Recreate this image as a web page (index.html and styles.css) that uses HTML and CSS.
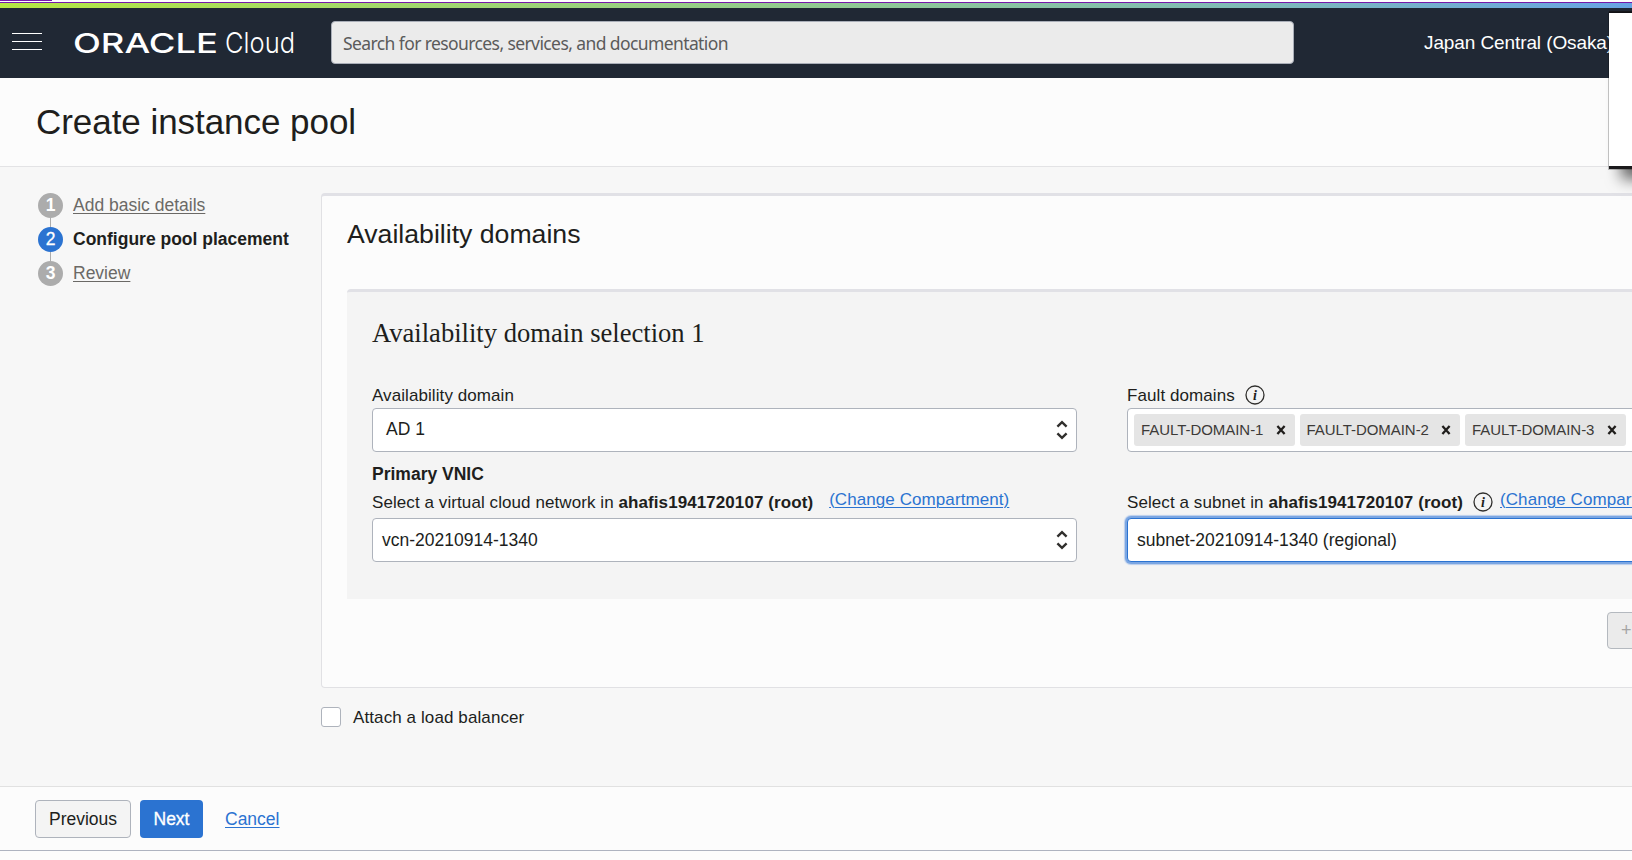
FILE: index.html
```html
<!DOCTYPE html>
<html lang="en">
<head>
<meta charset="utf-8">
<title>Create instance pool</title>
<link rel="stylesheet" href="styles.css">
</head>
<body>
<div class="page">
  <div class="tab-line"><span class="tab-mark"></span></div>
  <div class="rainbow"></div>
  <header class="topbar">
    <div class="menu"><i></i><i></i><i></i></div>
    <div class="logo">
      <svg width="222" height="30" viewBox="0 0 222 30" role="img">
        <text class="logo-oracle" x="-1" y="23.8" textLength="145" lengthAdjust="spacingAndGlyphs">ORACLE</text>
        <text class="logo-cloud" x="151" y="23.8" textLength="70" lengthAdjust="spacingAndGlyphs">Cloud</text>
      </svg>
    </div>
    <div class="search"><span>Search for resources, services, and documentation</span></div>
    <div class="region">Japan Central (Osaka)</div>
  </header>
  <div class="title-bar"><h1>Create instance pool</h1></div>
  <main class="content">
    <nav class="steps">
      <div class="step"><b class="num">1</b><a class="step-link">Add basic details</a></div>
      <div class="step active"><b class="num">2</b><span class="step-link">Configure pool placement</span></div>
      <div class="step"><b class="num">3</b><a class="step-link">Review</a></div>
    </nav>
    <section class="main-col">
      <div class="panel">
        <h2>Availability domains</h2>
        <div class="card">
          <h3>Availability domain selection 1</h3>
          <div class="cols">
            <div class="col">
              <div class="label"><span>Availability domain</span></div>
              <div class="field pad-ad"><span>AD 1</span>
                <svg class="updown" width="12" height="20" viewBox="0 0 12 20"><path d="M1.4 6.6 6 2.2l4.6 4.4M1.4 13.4 6 17.8l4.6-4.4"/></svg></div>
              <div class="subhead">Primary VNIC</div>
              <div class="label second"><span>Select a virtual cloud network in <b>ahafis1941720107 (root)</b></span><a class="change c1">(Change Compartment)</a></div>
              <div class="field low"><span>vcn-20210914-1340</span>
                <svg class="updown" width="12" height="20" viewBox="0 0 12 20"><path d="M1.4 6.6 6 2.2l4.6 4.4M1.4 13.4 6 17.8l4.6-4.4"/></svg></div>
            </div>
            <div class="col">
              <div class="label"><span>Fault domains</span>
                <svg class="info" width="20" height="20" viewBox="0 0 20 20"><circle cx="10" cy="10" r="9"/><text x="10" y="14.6">i</text></svg></div>
              <div class="field chips">
                <div class="chip"><span>FAULT-DOMAIN-1</span><svg width="10" height="10" viewBox="0 0 10 10"><path d="M1.4 1 8.6 9M8.6 1 1.4 9"/></svg></div>
                <div class="chip"><span>FAULT-DOMAIN-2</span><svg width="10" height="10" viewBox="0 0 10 10"><path d="M1.4 1 8.6 9M8.6 1 1.4 9"/></svg></div>
                <div class="chip"><span>FAULT-DOMAIN-3</span><svg width="10" height="10" viewBox="0 0 10 10"><path d="M1.4 1 8.6 9M8.6 1 1.4 9"/></svg></div>
              </div>
              <div class="subhead"></div>
              <div class="label second"><span>Select a subnet in <b>ahafis1941720107 (root)</b></span>
                <svg class="info" width="20" height="20" viewBox="0 0 20 20"><circle cx="10" cy="10" r="9"/><text x="10" y="14.6">i</text></svg><a class="change c2">(Change Compartment)</a></div>
              <div class="field low focus"><span>subnet-20210914-1340 (regional)</span></div>
            </div>
          </div>
        </div>
        <div class="add-row"><div class="add">+</div></div>
      </div>
      <div class="check-row"><span class="box"></span><span class="check-label">Attach a load balancer</span></div>
    </section>
  </main>
  <footer class="actions">
    <div class="btn prev"><span>Previous</span></div>
    <div class="btn next"><span>Next</span></div>
    <a class="cancel">Cancel</a>
  </footer>
  <div class="tail"></div>
  <div class="overlay"></div>
</div>
</body>
</html>
```
FILE: styles.css
```css
* { box-sizing: border-box; }
body { margin: 0; font-family: "Liberation Sans", Arial, sans-serif; color: #201e1c; }
h1, h2, h3 { margin: 0; font-weight: 400; }
span, a { white-space: nowrap; }
.page { position: relative; width: 1632px; height: 860px; overflow: hidden; background: #f7f7f7; display: flex; flex-direction: column; }
.tab-line { height: 3px; flex: none; background: #fff; border-bottom: 1px solid #7719aa; display: flex; }
.tab-mark { width: 52px; height: 1px; background: #7719aa; }
.rainbow { height: 5px; flex: none; background: linear-gradient(90deg, #b5e742 0%, #a5da65 20%, #80bcb5 75%, #68a4e4 100%); }
.topbar { height: 70px; flex: none; background: #202834; display: flex; }
.menu { width: 30px; height: 17px; margin: 25px 0 0 12px; display: flex; flex-direction: column; justify-content: space-between; }
.menu i { height: 1px; background: #fff; }
.logo { margin: 21px 0 0 32px; width: 222px; height: 30px; }
.logo svg { display: block; overflow: visible; }
.logo-oracle { font: 500 27px Inter, sans-serif; fill: #fff; }
.logo-cloud { font: 300 29px Inter, sans-serif; fill: #fff; }
.search { width: 963px; height: 43px; flex: none; margin: 13px 0 0 35px; background: #ebebeb; border: 1px solid #a9aeb8; border-radius: 4px; padding: 1px 0 0 11px; display: flex; align-items: center; color: #5b5b5b; font: 17.5px "Noto Sans", sans-serif; letter-spacing: -.6px; }
.region { margin: 24px 0 0 130px; font-size: 19px; line-height: 22px; letter-spacing: -.1px; color: #fff; white-space: nowrap; }
.title-bar { height: 89px; flex: none; background: #fcfcfc; border-bottom: 1px solid #e3e3e5; padding: 23px 0 0 36px; }
h1 { font-size: 35px; line-height: 42px; letter-spacing: -.05px; white-space: nowrap; }
.content { height: 619px; flex: none; display: flex; }
.steps { width: 321px; flex: none; padding: 26px 0 0 38px; }
.step { height: 34px; display: flex; position: relative; }
.step + .step::before { content: ""; position: absolute; left: 12px; top: -9px; width: 1px; height: 9px; background: #acacac; }
.num { width: 25px; height: 25px; border-radius: 50%; background: #acacac; color: #fff; text-align: center; font-size: 17.5px; line-height: 25px; }
.active .num { background: #2b73d1; font-weight: 400; -webkit-text-stroke: .3px #fff; }
.step-link { margin-left: 10px; font-size: 17.5px; line-height: 25px; color: #6b6966; text-decoration: underline; text-underline-offset: 2px; text-decoration-thickness: 1px; align-self: flex-start; }
.active .step-link { color: #201e1c; font-weight: 700; text-decoration: none; }
.main-col { flex: none; width: 1600px; padding-top: 26px; }
.panel { height: 495px; background: #fcfcfc; border: 1px solid #e1e1e4; border-top: 3px solid #e1e1e6; border-radius: 4px; padding: 22px 25px 0; }
h2 { font-size: 26.65px; line-height: 32px; white-space: nowrap; }
.card { margin-top: 39px; height: 310px; background: #f4f4f4; border-top: 3px solid #e1e1e6; border-radius: 4px 4px 0 0; padding: 22px 0 0 25px; }
h3 { font: 26.6px/38px "Liberation Serif", serif; white-space: nowrap; }
.cols { display: flex; gap: 50px; padding-top: 33px; }
.col { width: 705px; flex: none; }
.label { height: 23px; font-size: 17px; line-height: 22px; letter-spacing: .08px; display: flex; }
.field { height: 44px; background: #fff; border: 1px solid #aeb3bc; border-radius: 4px; padding: 0 9px; display: flex; align-items: center; justify-content: space-between; font-size: 17.5px; }
.field span { margin-top: -2px; }
.field.low span { margin-top: 0; }
.field.pad-ad { padding-left: 13px; }
.updown { fill: none; stroke: #302f2d; stroke-width: 2.4; margin-right: -1px; flex: none; }
.subhead { height: 33px; padding-top: 11px; font-size: 17.5px; line-height: 22px; font-weight: 700; }
.label.second { height: 33px; padding-top: 7px; }
.change { color: #2b73d1; text-decoration: underline; text-decoration-thickness: 1px; text-underline-offset: 2px; margin-top: -3px; }
.c1 { margin-left: 16px; }
.c2 { margin-left: 7px; }
.info { margin: 0 0 0 10px; overflow: visible; flex: none; }
.info circle { fill: none; stroke: #302f2d; stroke-width: 1.3; }
.info text { font: italic 700 14px "Liberation Serif", serif; text-anchor: middle; fill: #201e1c; }
.field.chips { justify-content: flex-start; gap: 5px; padding: 0 6px; }
.chip { width: 160.5px; height: 32px; flex: none; background: #e5e5e5; border-radius: 3px; padding: 0 9px 0 7px; display: flex; align-items: center; justify-content: space-between; font-size: 15px; letter-spacing: -.05px; color: #3c3a38; }
.field .chip span { margin-top: -1px; }
.chip path { fill: none; stroke: #201e1c; stroke-width: 2.3; }
.field.focus { border-color: #2b73d1; box-shadow: 0 0 0 2px #7ba6e2, 0 0 1px 3px #b8cdec; }
.add-row { display: flex; padding: 13px 0 0 1260px; }
.add { width: 120px; flex: none; height: 37px; background: #ebebeb; border: 1px solid #b4b9bf; border-radius: 4px; padding-left: 13px; font-size: 18px; line-height: 34px; color: #a5a5a5; }
.check-row { display: flex; padding-top: 18px; }
.box { width: 20px; height: 20px; margin-top: 1px; background: #fff; border: 1px solid #aeb3bc; border-radius: 3px; }
.check-label { margin: 1px 0 0 12px; font-size: 17px; line-height: 22px; letter-spacing: .1px; }
.actions { height: 65px; flex: none; background: #fcfcfc; border-top: 1px solid #e1e1e1; border-bottom: 1px solid #aeb3c0; display: flex; padding: 13px 0 0 35px; font-size: 17.5px; }
.btn { height: 38px; border-radius: 4px; display: flex; align-items: center; justify-content: center; }
.prev { width: 96px; background: #f4f4f4; border: 1px solid #aeb3bc; }
.next { width: 63px; margin-left: 9px; background: #2b73d1; color: #fff; -webkit-text-stroke: .3px #fff; }
.cancel { margin: 8px 0 0 22px; line-height: 22px; height: 24px; color: #2b73d1; text-decoration: underline; text-decoration-thickness: 1px; text-underline-offset: 2px; }
.tail { flex: 1; background: #fcfcfc; }
.overlay { position: absolute; left: 1609px; top: 13px; width: 60px; height: 153px; background: #fff; box-sizing: content-box; border-bottom: 3px solid #1b1a1c; box-shadow: 0 0 0 1px rgba(0,0,0,.22), 0 -2px 0 #17171b, 12px 10px 14px rgba(0,0,0,.6); }
```
